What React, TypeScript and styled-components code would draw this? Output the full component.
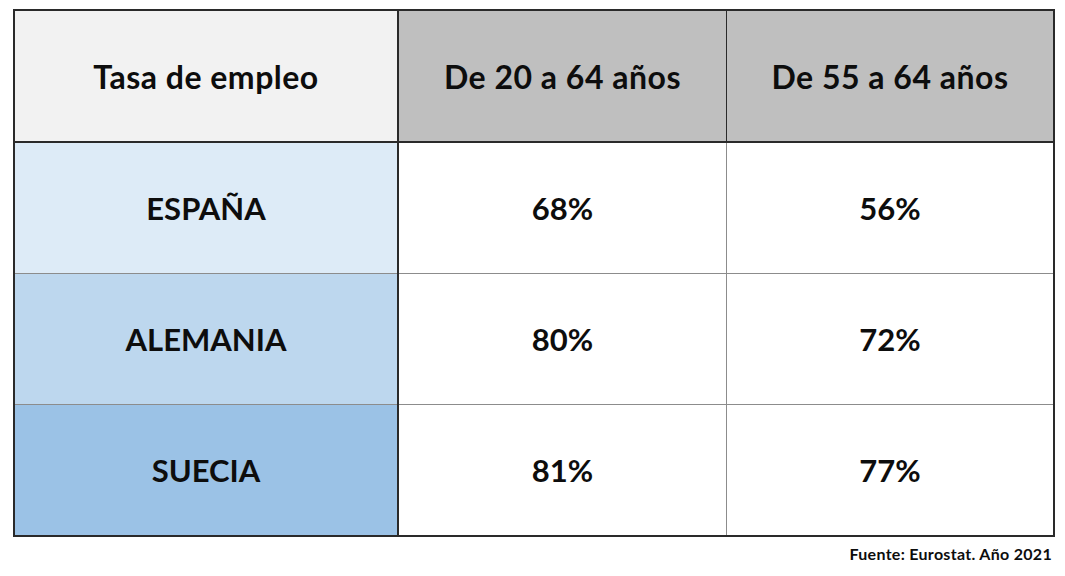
import React from "react";
import styled, { createGlobalStyle } from "styled-components";

const Global = createGlobalStyle`
  html, body { margin: 0; padding: 0; background: #ffffff; }
  body { font-family: Lato, "Liberation Sans", sans-serif; color: #0d0d0d; }
`;

const Page = styled.div`
  padding: 9px 10px 0 13px;
  width: 1042px;
`;

const Table = styled.div`
  display: grid;
  grid-template-columns: 382px 2px 327px 1px 326px;
  grid-template-rows: 130px 2px 130px 1px 130px 1px 130px;
  border: 2px solid #2a2a2a;
  background: #8c8c8c;
`;

const Cell = styled.div<{ $bg: string; $head?: boolean }>`
  display: flex;
  align-items: center;
  justify-content: center;
  background: ${(p) => p.$bg};
  font-weight: 700;
  font-size: ${(p) => (p.$head ? "32px" : "31px")};
  letter-spacing: ${(p) => (p.$head ? "0.5px" : "0")};
  color: #0d0d0d;
`;

const DarkRule = styled.div`
  background: #2a2a2a;
`;

const LightRule = styled.div<{ $dark?: boolean }>`
  background: ${(p) => (p.$dark ? "#2a2a2a" : "#8c8c8c")};
`;

const Footer = styled.div`
  text-align: right;
  font-weight: 700;
  font-size: 16px;
  letter-spacing: 0.3px;
  line-height: 18px;
  padding: 8px 3px 0 0;
  color: #0d0d0d;
`;

const rows = [
  { name: "ESPAÑA", bg: "#ddebf7", a: "68%", b: "56%" },
  { name: "ALEMANIA", bg: "#bdd7ee", a: "80%", b: "72%" },
  { name: "SUECIA", bg: "#9bc2e6", a: "81%", b: "77%" },
];

export default function App() {
  return (
    <>
      <Global />
      <Page>
        <Table>
          <Cell $head $bg="#f2f2f2">Tasa de empleo</Cell>
          <DarkRule />
          <Cell $head $bg="#bfbfbf">De 20 a 64 años</Cell>
          <LightRule $dark />
          <Cell $head $bg="#bfbfbf">De 55 a 64 años</Cell>
          <DarkRule style={{ gridColumn: "1 / -1" }} />
          {rows.map((r, i) => (
            <React.Fragment key={r.name}>
              {i > 0 && (
                <>
                  <LightRule />
                  <DarkRule />
                  <LightRule />
                  <LightRule />
                  <LightRule />
                </>
              )}
              <Cell $bg={r.bg}>{r.name}</Cell>
              <DarkRule />
              <Cell $bg="#ffffff">{r.a}</Cell>
              <LightRule />
              <Cell $bg="#ffffff">{r.b}</Cell>
            </React.Fragment>
          ))}
        </Table>
        <Footer>Fuente: Eurostat. Año 2021</Footer>
      </Page>
    </>
  );
}
